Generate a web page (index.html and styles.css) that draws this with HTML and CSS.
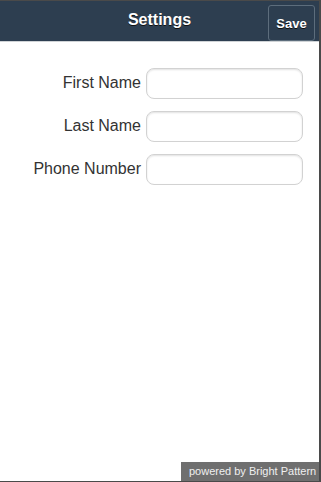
FILE: index.html
```html
<!DOCTYPE html>
<html>
<head>
<meta charset="utf-8">
<link rel="stylesheet" href="styles.css">
</head>
<body>
<div class="frame">
  <header class="header">
    <h1 class="title">Settings</h1>
    <button class="save">Save</button>
  </header>
  <main class="content">
    <form class="form">
      <label class="label" for="fn">First Name</label>
      <input class="field" id="fn" type="text">
      <label class="label" for="ln">Last Name</label>
      <input class="field" id="ln" type="text">
      <label class="label" for="ph">Phone Number</label>
      <input class="field" id="ph" type="text">
    </form>
  </main>
  <footer class="powered">powered by Bright Pattern</footer>
</div>
</body>
</html>
```
FILE: styles.css
```css
html, body {
  margin: 0;
  padding: 0;
  background: #fff;
}
body {
  font-family: "Liberation Sans", Arial, sans-serif;
}
.frame {
  box-sizing: border-box;
  width: 321px;
  height: 482px;
  border-top: 1px solid #4a4a4a;
  border-bottom: 1px solid #4a4a4a;
  border-right: 2px solid #4a4a4a;
  display: flex;
  flex-direction: column;
  background: #fff;
}
.header {
  position: relative;
  height: 40px;
  background: #2d3e50;
  border-bottom: 1px solid #cfd3d6;
  display: flex;
  align-items: center;
  justify-content: center;
}
.title {
  margin: 0;
  font-size: 16px;
  font-weight: bold;
  color: #fff;
  text-shadow: 0 1px 0 #111;
  padding-bottom: 2px;
}
.save {
  position: absolute;
  right: 4px;
  top: 4px;
  box-sizing: border-box;
  width: 47px;
  height: 36px;
  background: #2d3e50;
  border: 1px solid #5d6d7c;
  border-radius: 3px;
  color: #fff;
  font-family: "Liberation Sans", Arial, sans-serif;
  font-size: 13px;
  font-weight: bold;
  text-shadow: 0 1px 0 #111;
  padding: 0;
}
.content {
  flex: 1;
}
.form {
  display: grid;
  grid-template-columns: 141px 157px;
  column-gap: 5px;
  row-gap: 12px;
  margin-top: 26px;
}
.label {
  align-self: center;
  text-align: right;
  font-size: 16px;
  color: #333;
  padding-bottom: 2px;
}
.field {
  box-sizing: border-box;
  height: 31px;
  width: 157px;
  margin: 0;
  border: 1px solid #d2d2d2;
  border-radius: 8px;
  box-shadow: inset 0 1px 2px rgba(0,0,0,0.12);
  background: #fff;
  font-size: 16px;
  padding: 0 8px;
}
.powered {
  align-self: flex-end;
  box-sizing: border-box;
  height: 19px;
  width: 138px;
  padding-left: 8px;
  background: #6f6f6f;
  color: #f0f0f0;
  font-size: 11px;
  line-height: 19px;
  white-space: nowrap;
}
```
